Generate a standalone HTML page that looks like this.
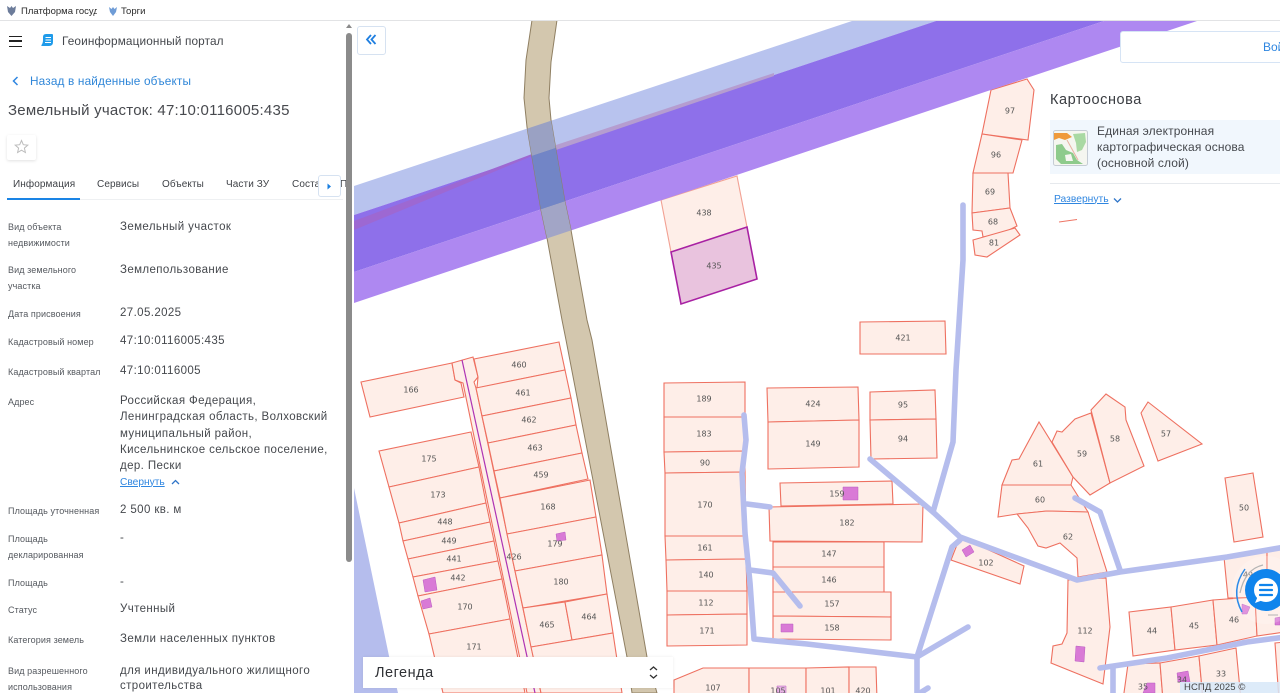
<!DOCTYPE html>
<html lang="ru"><head><meta charset="utf-8"><title>Геоинформационный портал</title>
<style>
html,body{margin:0;padding:0;width:1280px;height:693px;overflow:hidden;background:#fff;font-family:"Liberation Sans",sans-serif;color:#3c3f44}
.t{position:absolute;white-space:nowrap;line-height:16px;margin-top:-7.5px}
.l{font-size:9px;color:#55595f;letter-spacing:.1px;left:8px}
.v{font-size:11.5px;color:#45484d;letter-spacing:.39px;left:120px}
.tab{font-size:10px;color:#3f4247;top:184px;letter-spacing:.1px}
svg text{font-family:"DejaVu Sans",sans-serif;font-size:8px;fill:#555;text-anchor:middle;dominant-baseline:middle}
.p polygon{fill:#feeee8;stroke:#ee7060;stroke-width:1.1}
.b polygon{fill:#d97ad6;stroke:#b85cc0;stroke-width:.5}
.r polyline{fill:none;stroke:#b5bded;stroke-width:5.6;stroke-linejoin:round;stroke-linecap:round}
.map{filter:blur(.3px)}
</style></head><body>

<svg class="map" style="position:absolute;left:354px;top:20px" width="926" height="673" viewBox="354 20 926 673">
<defs><clipPath id="rd"><polygon points="532,20 526,60 524,98 527,127 532,157 541,210 547,238 562,320 566,340 627,657 632,693 657,693 647,657 592,340 587,320 571,230 565,202 556,150 551,120 549,98 551,62 557,20"/></clipPath></defs>
<polygon points="354,488 389,656 398,693 354,693" fill="#b5bded"/>
<g class="p">
<polygon points="661,200 737,176 747,227 671,252" style="stroke:#f2a193"/>
<polygon points="361,382 452,363 455,380 461,383 464,397 370,417"/>
<polygon points="452,363 473,357 478,377 474,382 476,388 541,693 527,693 463,383 455,380"/>
<polygon points="474,359 559,342 565,370 477,388 478,377"/>
<polygon points="476,388 565,370 571,398 482,416"/>
<polygon points="482,416 571,398 576,425 488,443"/>
<polygon points="488,443 576,425 582,453 494,471"/>
<polygon points="494,471 582,453 588,479 500,498"/>
<polygon points="500,498 590,480 596,517 507,534"/>
<polygon points="507,534 596,517 602,555 515,571"/>
<polygon points="515,571 602,555 607,594 523,608"/>
<polygon points="523,608 565,602 572,640 531,647"/>
<polygon points="565,602 607,594 613,633 572,640"/>
<polygon points="531,647 613,633 622,693 541,693"/>
<polygon points="379,451 471,432 479,467 389,487"/>
<polygon points="389,487 479,467 486,503 399,523"/>
<polygon points="399,523 486,503 490,522 403,541"/>
<polygon points="403,541 490,522 494,541 408,559"/>
<polygon points="408,559 494,541 498,561 413,577"/>
<polygon points="413,577 498,561 502,579 418,596"/>
<polygon points="418,596 502,579 510,619 429,634"/>
<polygon points="429,634 510,619 525,693 443,693"/>
<polygon points="664,383 745,382 745,417 664,417"/>
<polygon points="664,417 745,417 745,451 664,452"/>
<polygon points="664,452 745,451 745,472 665,473"/>
<polygon points="665,473 745,472 746,536 665,536"/>
<polygon points="665,536 746,536 746,559 666,560"/>
<polygon points="666,560 746,559 747,591 667,591"/>
<polygon points="667,591 747,591 747,614 667,615"/>
<polygon points="667,615 747,614 747,645 667,646"/>
<polygon points="767,388 858,387 859,420 768,422"/>
<polygon points="768,422 859,420 859,467 768,469"/>
<polygon points="870,392 935,390 936,419 870,420"/>
<polygon points="870,420 936,419 937,458 871,459"/>
<polygon points="860,322 945,321 946,354 860,354"/>
<polygon points="780,483 892,481 893,504 781,506"/>
<polygon points="769,507 923,504 922,542 770,541"/>
<polygon points="773,542 884,542 884,567 773,567"/>
<polygon points="773,567 884,567 884,592 773,592"/>
<polygon points="773,592 891,592 891,617 773,616"/>
<polygon points="773,616 891,617 891,640 773,639"/>
<polygon points="674,680 703,668 749,668 749,700 674,700"/>
<polygon points="749,668 806,668 806,700 749,700"/>
<polygon points="806,668 849,667 849,700 806,700"/>
<polygon points="849,667 876,667 877,700 849,700"/>
<polygon points="1002,485 1012,460 1019,459 1039,422 1073,477 1071,485"/>
<polygon points="1052,442 1057,431 1062,432 1075,419 1091,413 1110,483 1090,495 1073,477"/>
<polygon points="1091,410 1106,394 1125,407 1126,420 1144,466 1110,483"/>
<polygon points="1141,413 1148,402 1202,444 1158,461"/>
<polygon points="1002,485 1071,485 1088,512 1047,511 1017,514 998,517"/>
<polygon points="1017,514 1047,511 1088,512 1107,572 1078,577 1077,558 1060,543 1046,548 1038,546 1028,528"/>
<polygon points="1225,478 1253,473 1263,537 1234,542"/>
<polygon points="960,537 1024,566 1020,584 951,560"/>
<polygon points="1068,580 1106,578 1110,627 1103,684 1051,663 1053,646 1062,644 1067,633"/>
<polygon points="1129,612 1171,607 1175,650 1133,656"/>
<polygon points="1171,607 1213,600 1217,645 1175,650"/>
<polygon points="1213,600 1255,597 1257,636 1217,645"/>
<polygon points="1255,597 1285,592 1285,632 1257,636"/>
<polygon points="1224,557 1267,549 1267,597 1228,598"/>
<polygon points="1267,549 1285,546 1285,595 1267,597"/>
<polygon points="1128,664 1160,663 1163,700 1123,700"/>
<polygon points="1160,663 1199,656 1203,700 1163,700"/>
<polygon points="1199,656 1236,648 1241,700 1203,700"/>
<polygon points="1275,643 1285,642 1285,700 1279,700"/>
<polygon points="991,90 1027,79 1034,90 1028,140 982,134"/>
<polygon points="982,134 1022,140 1013,173 973,173"/>
<polygon points="973,173 1008,173 1010,208 972,213"/>
<polygon points="972,213 1010,208 1017,226 1003,233 983,237 982,231 973,230"/>
<polygon points="973,240 1015,228 1020,235 987,257 975,255"/>
</g>
<polygon points="671,252 747,227 757,279 681,304" fill="#e9c3de" stroke="#a821a3" stroke-width="1.6"/>
<g class="b">
<polygon points="423,580 435,577 437,590 425,592"/>
<polygon points="421,601 430,598 432,607 423,609"/>
<polygon points="556,534 565,532 566,540 557,541"/>
<polygon points="843,487 858,487 858,500 843,500"/>
<polygon points="781,624 793,624 793,632 781,632"/>
<polygon points="777,686 786,686 786,693 777,693" style="fill:#e9b5e5"/>
<polygon points="962,550 970,545 974,552 966,557"/>
<polygon points="1076,646 1085,647 1084,662 1075,661"/>
<polygon points="1242,604 1250,607 1247,614 1242,614"/>
<polygon points="1275,618 1280,617 1280,625 1275,625"/>
<polygon points="1177,673 1188,671 1190,682 1178,682"/>
<polygon points="1147,683 1155,683 1155,693 1143,693"/>
</g>
<line x1="462" y1="360" x2="535" y2="693" stroke="#ae33b4" stroke-width="1.2"/>
<g class="r">
<polyline points="744,415 746,440 742,473 745,533 750,583 754,639 807,644 917,657"/>
<polyline points="747,504 770,507"/>
<polyline points="750,570 773,573 800,606"/>
<polyline points="963,205 963,260 956,370 953,442 933,512"/>
<polyline points="870,459 933,512 960,537 1077,580 1120,572 1227,557 1285,547"/>
<polyline points="1075,498 1100,512 1120,570"/>
<polyline points="917,657 952,547 960,540"/>
<polyline points="917,657 968,627"/>
<polyline points="917,657 917,700"/>
<polyline points="920,693 928,688"/>
<polyline points="1100,668 1167,658 1247,642 1285,637"/>
<polyline points="1113,668 1113,700"/>
</g>
<!-- bands -->
<polygon points="354,186 855,20 939,20 354,215" fill="#b8c3ee"/>
<polygon points="354,215 939,20 1107,20 354,272" fill="#8e70ea"/>
<polygon points="354,272 1107,20 1200,20 354,303" fill="#ae88f1"/>
<polygon points="354,221 532,154 556,146 354,230" fill="#9d68d2"/>
<polygon points="556,145 774,73 774,76 556,150" fill="#b59dd0"/>
<!-- road -->
<polygon points="532,20 526,60 524,98 527,127 532,157 541,210 547,238 562,320 566,340 627,657 632,693 657,693 647,657 592,340 587,320 571,230 565,202 556,150 551,120 549,98 551,62 557,20" fill="#d3c7ae" stroke="#8f7f62" stroke-width="1"/>
<g clip-path="url(#rd)">
<polygon points="354,186 855,20 939,20 354,215" fill="#9aa1c3"/>
<polygon points="354,215 939,20 1107,20 354,272" fill="#7285c6"/>
<polygon points="354,272 1107,20 1200,20 354,303" fill="#a2a5c6"/>
</g>
<g>
<text x="519" y="365">460</text><text x="523" y="393">461</text><text x="529" y="420">462</text><text x="535" y="448">463</text><text x="541" y="475">459</text><text x="548" y="507">168</text><text x="555" y="544">179</text><text x="561" y="582">180</text><text x="547" y="625">465</text><text x="589" y="617">464</text><text x="411" y="390">166</text><text x="429" y="459">175</text><text x="438" y="495">173</text><text x="445" y="522">448</text><text x="449" y="541">449</text><text x="454" y="559">441</text><text x="458" y="578">442</text><text x="465" y="607">170</text><text x="474" y="647">171</text><text x="514" y="557">426</text>
<text x="704" y="399">189</text><text x="704" y="434">183</text><text x="705" y="463">90</text><text x="705" y="505">170</text><text x="705" y="548">161</text><text x="706" y="575">140</text><text x="706" y="603">112</text><text x="707" y="631">171</text><text x="813" y="404">424</text><text x="813" y="444">149</text><text x="903" y="405">95</text><text x="903" y="439">94</text><text x="837" y="494">159</text><text x="847" y="523">182</text><text x="829" y="554">147</text><text x="829" y="580">146</text><text x="832" y="604">157</text><text x="832" y="628">158</text><text x="713" y="688">107</text><text x="778" y="691">105</text><text x="828" y="691">101</text><text x="863" y="691">420</text><text x="903" y="338">421</text>
<text x="1038" y="464">61</text><text x="1040" y="500">60</text><text x="1068" y="537">62</text><text x="1082" y="454">59</text><text x="1115" y="439">58</text><text x="1166" y="434">57</text><text x="1244" y="508">50</text><text x="986" y="563">102</text><text x="1085" y="631">112</text><text x="1152" y="631">44</text><text x="1194" y="626">45</text><text x="1234" y="620">46</text><text x="1248" y="575">49</text><text x="1143" y="687">35</text><text x="1182" y="680">34</text><text x="1221" y="674">33</text>
<text x="1010" y="111">97</text><text x="996" y="155">96</text><text x="990" y="192">69</text><text x="993" y="222">68</text><text x="994" y="243">81</text><text x="704" y="213">438</text><text x="714" y="266">435</text>
</g>
<polyline points="1059,222 1077,219.5" stroke="#ee7565" fill="none"/>
</svg>

<!-- right floating panel -->
<div style="position:absolute;left:1120px;top:31px;width:170px;height:30px;background:#fff;border:1px solid #d6e4f5;border-radius:3px"></div>
<div class="t" style="left:1263px;top:46px;font-size:12px;color:#2f86e0">Вой</div>
<div class="t" style="left:1050px;top:99px;font-size:14.5px;letter-spacing:.55px;color:#3a3d42">Картооснова</div>
<div style="position:absolute;left:1050px;top:120px;width:230px;height:54px;background:#f1f7fd"></div>
<div style="position:absolute;left:1050px;top:183px;width:230px;height:1px;background:#e6e9ed"></div>
<svg style="position:absolute;left:1053px;top:130px" width="35" height="36" viewBox="0 0 35 36"><rect x=".5" y=".5" width="34" height="35" rx="2" fill="#f5f6f0" stroke="#c5ccd4"/><path d="M1 3H14L19 7 12 10 6 8 1 10Z" fill="#ef9a3b"/><path d="M20 4L32 3 33 12 29 20 24 22 23 13Z" fill="#a9d9a3"/><path d="M3 15L9 14 13 20 20 23 24 30 30 34H8L3 29Z" fill="#8ecb8c"/><path d="M12 25L18 24 20 31 13 31Z" fill="#f5f6f0"/><path d="M14 10L25 30" stroke="#e8b0a0" fill="none"/></svg>
<div class="t" style="left:1097px;top:130.500px;font-size:12px;letter-spacing:.12px;color:#45484d">Единая электронная</div>
<div class="t" style="left:1097px;top:146.500px;font-size:12px;letter-spacing:.12px;color:#45484d">картографическая основа</div>
<div class="t" style="left:1097px;top:162.500px;font-size:12px;letter-spacing:.12px;color:#45484d">(основной слой)</div>
<div class="t" style="left:1054px;top:199px;font-size:10.3px;color:#2f86e0;text-decoration:underline">Развернуть</div>
<svg style="position:absolute;left:1113px;top:197px" width="9" height="7" viewBox="0 0 9 7"><path d="M1 1.5L4.500 5 8 1.500" fill="none" stroke="#2f75c8" stroke-width="1.300"/></svg>

<!-- collapse button -->
<div style="position:absolute;left:357px;top:26px;width:27px;height:27px;background:#fff;border:1px solid #d6e2f1;border-radius:3px"></div>
<svg style="position:absolute;left:365px;top:33px" width="12" height="13" viewBox="0 0 12 13"><path d="M6 2L2 6.500 6 11M10.500 2L6.500 6.500 10.500 11" fill="none" stroke="#1f7fe0" stroke-width="1.800"/></svg>

<!-- legend -->
<div style="position:absolute;left:363px;top:657px;width:310px;height:31px;background:#fff;box-shadow:0 0 3px rgba(0,0,0,.08)"></div>
<div class="t" style="left:375px;top:672.500px;font-size:14.500px;letter-spacing:.5px;color:#2f3135">Легенда</div>
<svg style="position:absolute;left:648px;top:665px" width="11" height="15" viewBox="0 0 11 15"><path d="M2 5L5.500 2 9 5M2 10L5.500 13 9 10" fill="none" stroke="#333" stroke-width="1.300"/></svg>

<!-- attribution -->
<div style="position:absolute;left:1180px;top:682px;width:100px;height:11px;background:rgba(215,232,248,.85)"></div>
<div class="t" style="left:1184px;top:687.500px;font-size:9.500px;letter-spacing:.1px;color:#444">НСПД 2025 ©</div>

<!-- chat -->
<svg style="position:absolute;left:1225px;top:555px" width="55" height="70" viewBox="0 0 55 70">
<circle cx="41" cy="35" r="34" fill="#fff" opacity=".2"/>
<path d="M38 10Q20 14 15 38" fill="none" stroke="#b4b4b4" stroke-width="1.200"/>
<path d="M43 60H53" fill="none" stroke="#b4b4b4" stroke-width="1"/>
<path d="M20 14Q5 35 17 57" fill="none" stroke="#2d8be8" stroke-width="1.500"/>
<circle cx="41" cy="35" r="21" fill="#0f84ec"/>
<circle cx="41" cy="35" r="12" fill="#fff"/>
<path d="M33 41L30 48 38 45Z" fill="#fff"/>
<path d="M35 30H47M35 35H47M35 40H47" stroke="#0f84ec" stroke-width="2.200" stroke-linecap="round"/>
</svg>

<!-- left panel -->
<div style="position:absolute;left:0;top:0;width:354px;height:693px;background:#fff"></div>
<div style="position:absolute;left:0;top:0;width:1280px;height:20px;background:#fff;border-bottom:1px solid #e2e3e5;box-sizing:content-box"></div>
<svg style="position:absolute;left:6px;top:5px" width="11" height="12" viewBox="0 0 11 12"><path d="M1 1L4 3 5.500 1 7 3 10 1 9 7 5.500 11 2 7Z" fill="#6c7c9a"/></svg>
<div class="t" style="left:21px;top:11.500px;font-size:9.500px;color:#2b2b2b;width:76px;overflow:hidden">Платформа госуд</div>
<svg style="position:absolute;left:108px;top:6px" width="10" height="11" viewBox="0 0 10 11"><path d="M1 1L3.500 3 5 1 6.500 3 9 1 8 6 5 10 2 6Z" fill="#6f9cd6"/></svg>
<div class="t" style="left:121px;top:11.500px;font-size:9.500px;color:#2b2b2b">Торги</div>

<div style="position:absolute;left:9px;top:36px;width:13px;height:9px;border-top:1.500px solid #222;border-bottom:1.500px solid #222"></div>
<div style="position:absolute;left:9px;top:40px;width:13px;height:1.500px;background:#222"></div>
<svg style="position:absolute;left:40px;top:33px" width="14" height="14" viewBox="0 0 14 14"><path d="M6 1H12Q13 1 13 2V9Q13 13 9 13H2Q1 13 1.500 12 3 10 3 7V4Q3 1 6 1Z" fill="#1f9bea"/><path d="M5.500 4.500H11M5.500 7H11M5 9.500H11" stroke="#fff" stroke-width="1"/></svg>
<div class="t" style="left:62px;top:40.500px;font-size:11.800px;letter-spacing:.13px;color:#44474c">Геоинформационный портал</div>

<svg style="position:absolute;left:12px;top:76px" width="7" height="10" viewBox="0 0 7 10"><path d="M5.500 1L1.500 5 5.500 9" fill="none" stroke="#2f86e0" stroke-width="1.500"/></svg>
<div class="t" style="left:30px;top:80.500px;font-size:11.800px;letter-spacing:.16px;color:#2f86d8">Назад в найденные объекты</div>
<div class="t" style="left:8px;top:110px;font-size:15px;letter-spacing:.24px;color:#47494e">Земельный участок: 47:10:0116005:435</div>

<div style="position:absolute;left:7px;top:135px;width:29px;height:25px;background:#fff;box-shadow:0 1px 3px rgba(0,0,0,.12);border-radius:2px"></div>
<svg style="position:absolute;left:14px;top:139px" width="15" height="15" viewBox="0 0 15 15"><path d="M7.500 1.500L9.300 5.700 13.800 6.100 10.400 9.100 11.400 13.500 7.500 11.200 3.600 13.500 4.600 9.100 1.200 6.100 5.700 5.700Z" fill="none" stroke="#bcbcbc" stroke-width="1"/></svg>

<div class="t tab" style="left:13px">Информация</div>
<div class="t tab" style="left:97px">Сервисы</div>
<div class="t tab" style="left:162px">Объекты</div>
<div class="t tab" style="left:226px">Части ЗУ</div>
<div class="t tab" style="left:292px">Соста</div>
<div class="t tab" style="left:340px">П</div>
<div style="position:absolute;left:7px;top:199px;width:336px;height:1px;background:#eef0f2"></div>
<div style="position:absolute;left:7px;top:198px;width:73px;height:2px;background:#1a84e5"></div>
<div style="position:absolute;left:318px;top:175px;width:23px;height:22px;background:#fff;border:1px solid #d6e2f1;border-radius:3px;box-sizing:border-box"></div>
<svg style="position:absolute;left:327px;top:183px" width="5" height="7" viewBox="0 0 5 7"><path d="M.5 .5L4 3.500 .5 6.500Z" fill="#1a7fe0"/></svg>

<div class="t l" style="top:226px">Вид объекта</div><div class="t l" style="top:242px">недвижимости</div><div class="t v" style="top:226px">Земельный участок</div>
<div class="t l" style="top:269px">Вид земельного</div><div class="t l" style="top:285px">участка</div><div class="t v" style="top:269px">Землепользование</div>
<div class="t l" style="top:313px">Дата присвоения</div><div class="t v" style="top:312px">27.05.2025</div>
<div class="t l" style="top:341px">Кадастровый номер</div><div class="t v" style="top:340px">47:10:0116005:435</div>
<div class="t l" style="top:371px">Кадастровый квартал</div><div class="t v" style="top:370px">47:10:0116005</div>
<div class="t l" style="top:401px">Адрес</div>
<div class="t v" style="top:400px">Российская Федерация,</div>
<div class="t v" style="top:416.500px">Ленинградская область, Волховский</div>
<div class="t v" style="top:433px">муниципальный район,</div>
<div class="t v" style="top:449px">Кисельнинское сельское поселение,</div>
<div class="t v" style="top:465px">дер. Пески</div>
<div class="t" style="left:120px;top:482px;font-size:10.200px;color:#2f86e0;text-decoration:underline">Свернуть</div>
<svg style="position:absolute;left:171px;top:479px" width="9" height="7" viewBox="0 0 9 7"><path d="M1 5L4.500 1.500 8 5" fill="none" stroke="#2f75c8" stroke-width="1.300"/></svg>
<div class="t l" style="top:510px">Площадь уточненная</div><div class="t v" style="top:509px">2 500 кв. м</div>
<div class="t l" style="top:538px">Площадь</div><div class="t l" style="top:554px">декларированная</div><div class="t v" style="top:537px">-</div>
<div class="t l" style="top:582px">Площадь</div><div class="t v" style="top:581px">-</div>
<div class="t l" style="top:609px">Статус</div><div class="t v" style="top:608px">Учтенный</div>
<div class="t l" style="top:639px">Категория земель</div><div class="t v" style="top:638px">Земли населенных пунктов</div>
<div class="t l" style="top:670px">Вид разрешенного</div><div class="t l" style="top:686px">использования</div>
<div class="t v" style="top:670px">для индивидуального жилищного</div><div class="t v" style="top:685px">строительства</div>

<!-- scrollbar -->
<svg style="position:absolute;left:345px;top:23px" width="8" height="6" viewBox="0 0 8 6"><path d="M4 1L7 5H1Z" fill="#8a8a8a"/></svg>
<div style="position:absolute;left:346px;top:33px;width:6px;height:529px;background:#8b8b8b;border-radius:3px"></div>
</body></html>
